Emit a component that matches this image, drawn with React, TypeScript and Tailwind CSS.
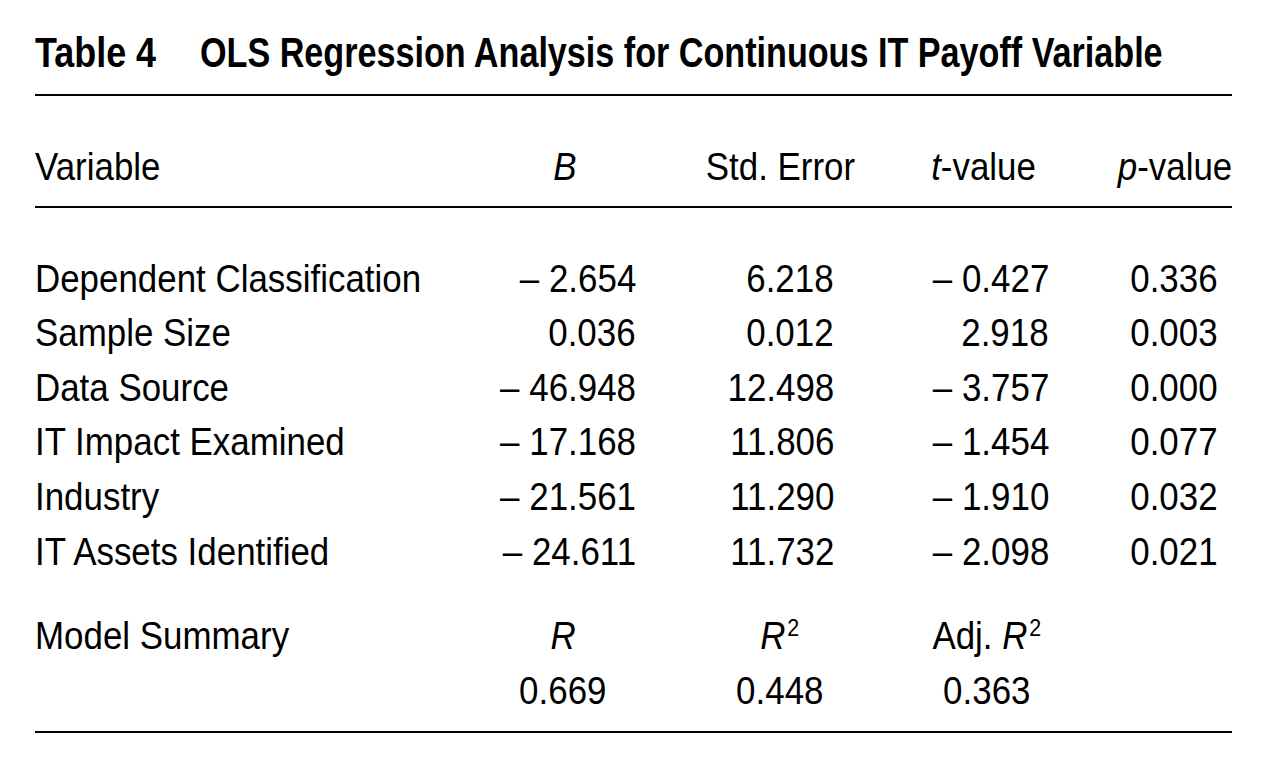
import React from "react";

const FONT = "font-['Liberation_Sans','Arial',sans-serif]";

const rows: [string, string, string, string, string][] = [
  ["Dependent Classification", "−2.654", "6.218", "−0.427", "0.336"],
  ["Sample Size", "0.036", "0.012", "2.918", "0.003"],
  ["Data Source", "−46.948", "12.498", "−3.757", "0.000"],
  ["IT Impact Examined", "−17.168", "11.806", "−1.454", "0.077"],
  ["Industry", "−21.561", "11.290", "−1.910", "0.032"],
  ["IT Assets Identified", "−24.611", "11.732", "−2.098", "0.021"],
];

function L({ children }: { children: React.ReactNode }) {
  return <span className="inline-block whitespace-nowrap scale-x-[0.895] origin-left">{children}</span>;
}
function Rt({ children }: { children: React.ReactNode }) {
  return <span className="inline-block whitespace-nowrap scale-x-[0.895] origin-right">{children}</span>;
}
function C({ children }: { children: React.ReactNode }) {
  return <span className="inline-block whitespace-nowrap scale-x-[0.895] origin-center">{children}</span>;
}

function Num({ v }: { v: string }) {
  if (v.startsWith("−")) {
    return (
      <Rt>
        –<span className="ml-[11px]">{v.slice(1)}</span>
      </Rt>
    );
  }
  return <Rt>{v}</Rt>;
}

function Sq() {
  return <span className="not-italic text-[24px] leading-[0px] relative -top-[13px] ml-[2px]">2</span>;
}

export default function App() {
  return (
    <div className={`w-[1280px] h-[780px] bg-white text-black ${FONT} pt-[27px] pl-[35px]`}>
      <div className="w-[1197px]">
        <div className="text-[42px] leading-[52px] font-bold flex">
          <span className="shrink-0 inline-block whitespace-nowrap scale-x-[0.855] origin-left w-[165px]">Table 4</span>
          <span className="shrink-0 inline-block whitespace-nowrap scale-x-[0.813] origin-left">
            OLS Regression Analysis for Continuous IT Payoff Variable
          </span>
        </div>
        <div className="mt-[15px] h-[2px] bg-black" />

        <div className="mt-[44px] flex text-[39px] leading-[54.6px]">
          <div className="w-[445px]">
            <L>Variable</L>
          </div>
          <div className="w-[170px] text-center">
            <C>
              <span className="italic">B</span>
            </C>
          </div>
          <div className="ml-[40px] w-[180px] text-center">
            <C>Std. Error</C>
          </div>
          <div className="ml-[30px] w-[168px] text-center">
            <C>
              <span className="italic">t</span>-value
            </C>
          </div>
          <div className="ml-[43px] w-[112px] text-center">
            <C>
              <span className="italic">p</span>-value
            </C>
          </div>
        </div>
        <div className="mt-[11px] h-[2px] bg-black" />

        <div className="mt-[44px] flex flex-col text-[39px] leading-[54.6px]">
          {rows.map((r) => (
            <div key={r[0]} className="flex">
              <div className="w-[445px]">
                <L>{r[0]}</L>
              </div>
              <div className="w-[170px] text-right pr-[14px]">
                <Num v={r[1]} />
              </div>
              <div className="ml-[40px] w-[180px] text-right pr-[36px]">
                <Num v={r[2]} />
              </div>
              <div className="ml-[30px] w-[168px] text-right pr-[19px]">
                <Num v={r[3]} />
              </div>
              <div className="ml-[52px] w-[112px] text-right pr-[14px]">
                <Num v={r[4]} />
              </div>
            </div>
          ))}
        </div>

        <div className="mt-[30px] flex flex-col text-[39px] leading-[54.6px]">
          <div className="flex">
            <div className="w-[445px]">
              <L>Model Summary</L>
            </div>
            <div className="w-[166px] text-center">
              <C>
                <span className="italic">R</span>
              </C>
            </div>
            <div className="ml-[44px] w-[180px] text-center">
              <C>
                <span className="italic">R</span>
                <Sq />
              </C>
            </div>
            <div className="ml-[30px] w-[174px] text-center">
              <C>
                Adj. <span className="italic">R</span>
                <Sq />
              </C>
            </div>
          </div>
          <div className="flex">
            <div className="w-[445px]" />
            <div className="w-[166px] text-center">
              <C>0.669</C>
            </div>
            <div className="ml-[44px] w-[180px] text-center">
              <C>0.448</C>
            </div>
            <div className="ml-[30px] w-[174px] text-center">
              <C>0.363</C>
            </div>
          </div>
        </div>
        <div className="mt-[13px] h-[2px] bg-black" />
      </div>
    </div>
  );
}
